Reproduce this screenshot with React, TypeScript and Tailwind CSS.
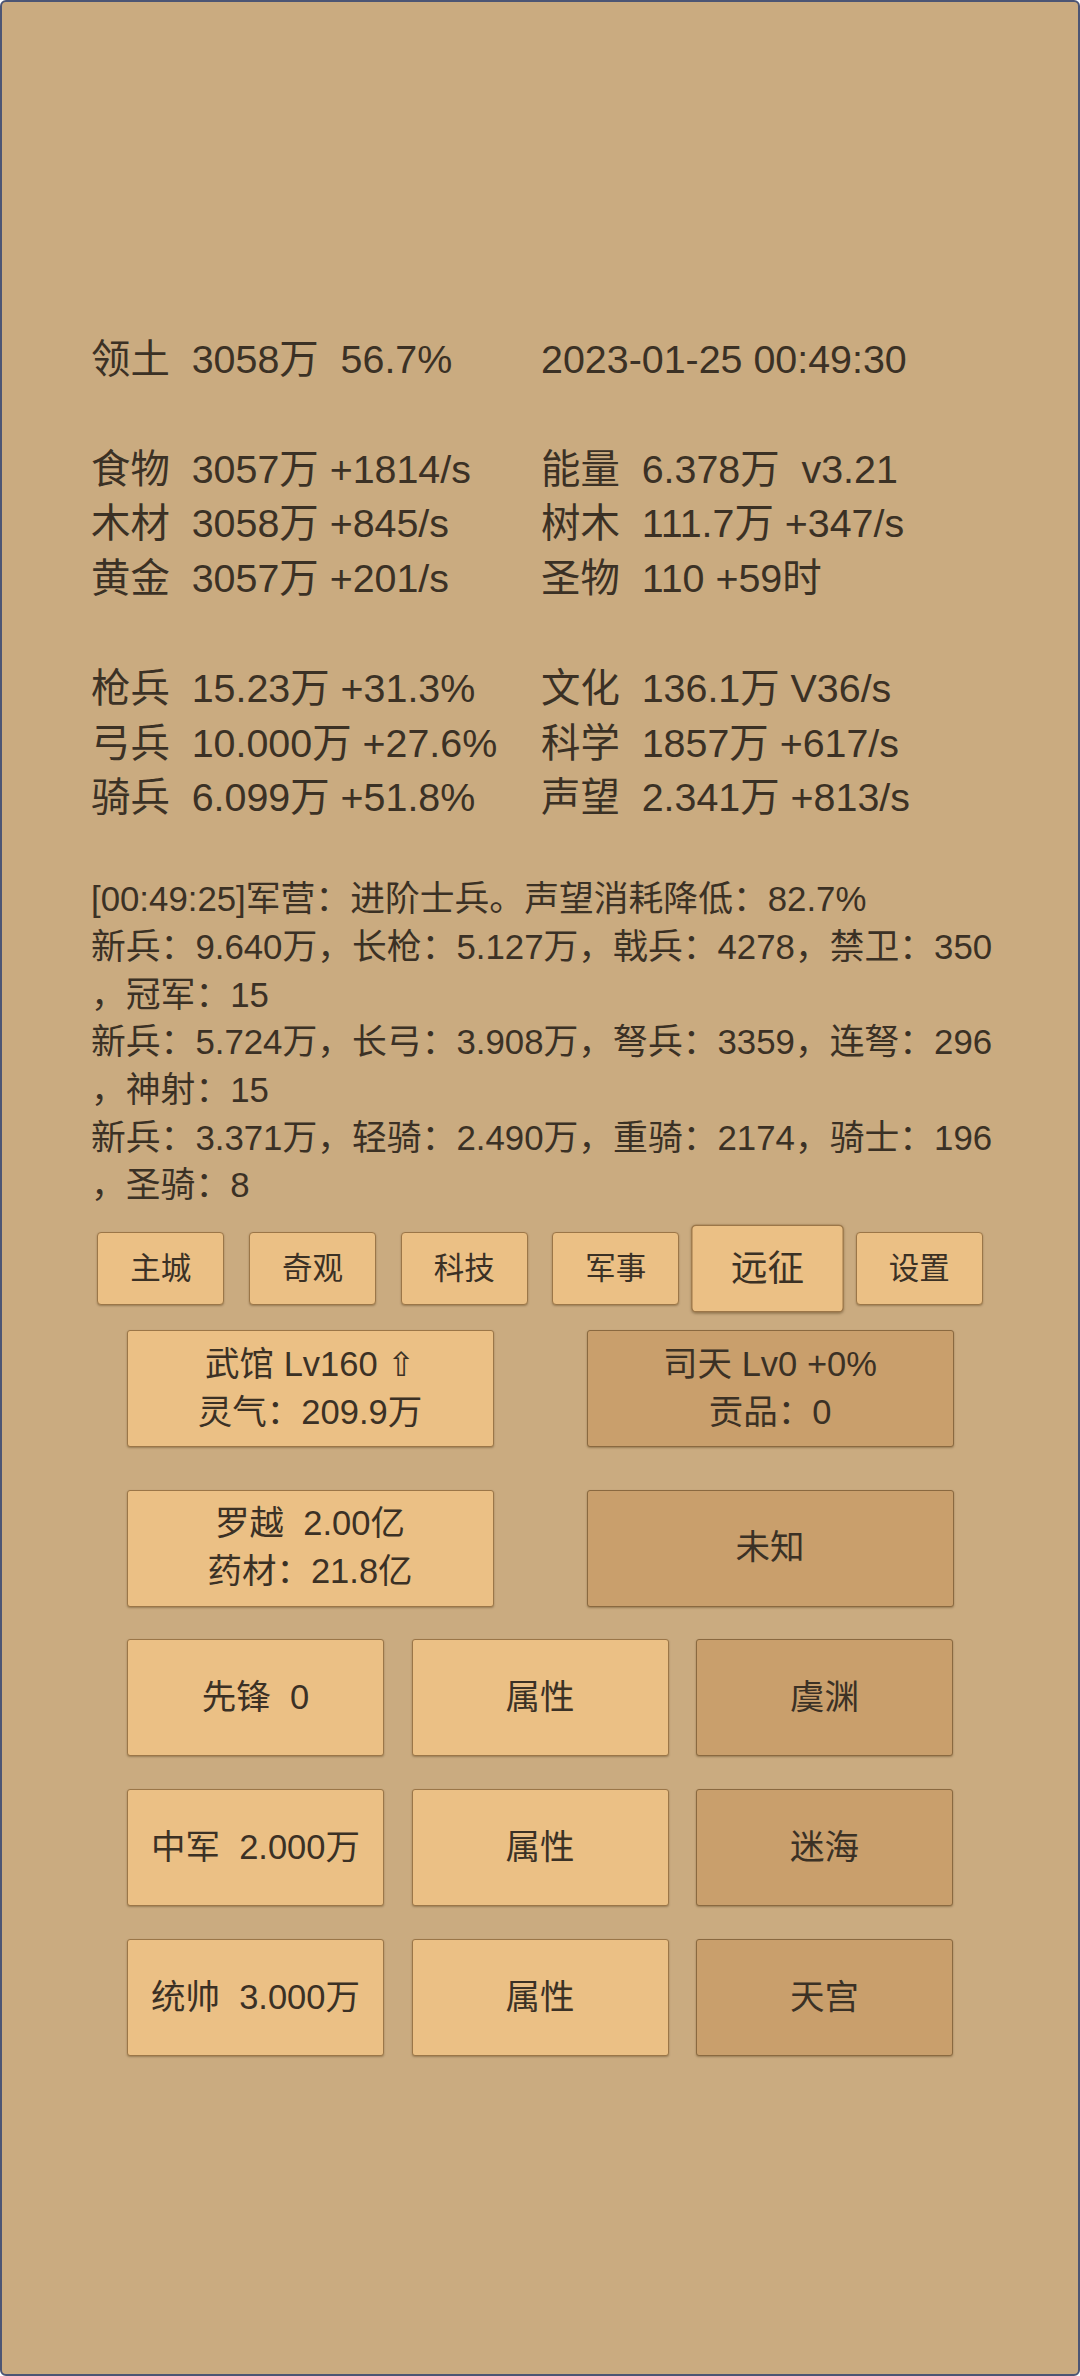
import React from 'react';

const font = 'font-["Liberation_Sans","Noto_Sans_CJK_SC",sans-serif]';

const stats: [string, string][] = [
   ['领土\u00a0\u00a03058万\u00a0\u00a056.7%', '2023-01-25 00:49:30'],
   ['', ''],
   ['食物\u00a0\u00a03057万 +1814/s', '能量\u00a0\u00a06.378万\u00a0\u00a0v3.21'],
   ['木材\u00a0\u00a03058万 +845/s', '树木\u00a0\u00a0111.7万 +347/s'],
   ['黄金\u00a0\u00a03057万 +201/s', '圣物\u00a0\u00a0110 +59时'],
   ['', ''],
   ['枪兵\u00a0\u00a015.23万 +31.3%', '文化\u00a0\u00a0136.1万 V36/s'],
   ['弓兵\u00a0\u00a010.000万 +27.6%', '科学\u00a0\u00a01857万 +617/s'],
   ['骑兵\u00a0\u00a06.099万 +51.8%', '声望\u00a0\u00a02.341万 +813/s'],
];

const logLines = [
   '[00:49:25]军营：进阶士兵。声望消耗降低：82.7%',
   '新兵：9.640万，长枪：5.127万，戟兵：4278，禁卫：350',
   '，冠军：15',
   '新兵：5.724万，长弓：3.908万，弩兵：3359，连弩：296',
   '，神射：15',
   '新兵：3.371万，轻骑：2.490万，重骑：2174，骑士：196',
   '，圣骑：8',
];

const tabs = ['主城', '奇观', '科技', '军事', '远征', '设置'];
const active = '远征';

const light = 'bg-[#ebc085] border border-[#9b7648]';
const dark = 'bg-[#c99f6c] border border-[#8a6940]';

const Card = ({ lines, tone, w }: { lines: React.ReactNode[]; tone: 'light' | 'dark'; w: string }) => (
   <div
      className={`${w} h-[117px] ${tone === 'light' ? light : dark} rounded-[3px] shadow-[0_1px_2px_rgba(60,40,10,0.35)] flex flex-col items-center justify-center text-[34.5px] leading-[47.7px]`}
   >
      {lines.map((l, i) => (
         <div key={i} className="whitespace-pre">{l}</div>
      ))}
   </div>
);

export default function App() {
   return (
      <div className={`w-[1080px] min-h-[2376px] box-border bg-[#caab80] border-2 border-[#4c5574] rounded-[6px] text-[#3b3125] ${font}`}>
         {/* resource stats */}
         <div className="pt-[330px] pl-[89px] text-[39.4px] leading-[54.8px]">
            {stats.map(([a, b], i) => (
               <div key={i} className="grid grid-cols-[450px_450px] h-[54.8px] whitespace-nowrap">
                  <div>{a}</div>
                  <div>{b}</div>
               </div>
            ))}
         </div>

         {/* log */}
         <div className="mt-[50px] pl-[89px] text-[34.8px] leading-[47.7px]">
            {logLines.map((l, i) => (
               <div key={i} className="whitespace-nowrap">{l}</div>
            ))}
         </div>

         {/* tabs */}
         <div className="mt-[23px] flex justify-center gap-[24.7px]">
            {tabs.map(t => (
               <button
                  key={t}
                  className={`w-[127px] h-[73px] ${light} rounded-[4px] shadow-[0_1px_2px_rgba(60,40,10,0.35)] text-[30.5px] text-[#3b3125] flex items-center justify-center ${t === active ? 'scale-[1.2] border-[#7d5c34]' : ''}`}
               >
                  {t}
               </button>
            ))}
         </div>

         {/* buildings */}
         <div className="mt-[25px] flex flex-col items-center">
            <div className="flex gap-[93px]">
               <Card
                  w="w-[367px]"
                  tone="light"
                  lines={[
                     <span>武馆 Lv160 <span className='font-["DejaVu_Sans",sans-serif] text-[33px]'>⇧</span></span>,
                     '灵气：209.9万',
                  ]}
               />
               <Card w="w-[367px]" tone="dark" lines={['司天 Lv0 +0%', '贡品：0']} />
            </div>
            <div className="mt-[42.6px] flex gap-[93px]">
               <Card w="w-[367px]" tone="light" lines={['罗越  2.00亿', '药材：21.8亿']} />
               <Card w="w-[367px]" tone="dark" lines={['未知']} />
            </div>
            <div className="mt-[32.6px] flex flex-col gap-[33px]">
               {[
                  ['先锋  0', '虞渊'],
                  ['中军  2.000万', '迷海'],
                  ['统帅  3.000万', '天宫'],
               ].map(([a, c]) => (
                  <div key={a} className="flex gap-[27.5px]">
                     <Card w="w-[257px]" tone="light" lines={[a]} />
                     <Card w="w-[257px]" tone="light" lines={['属性']} />
                     <Card w="w-[257px]" tone="dark" lines={[c]} />
                  </div>
               ))}
            </div>
         </div>
      </div>
   );
}
